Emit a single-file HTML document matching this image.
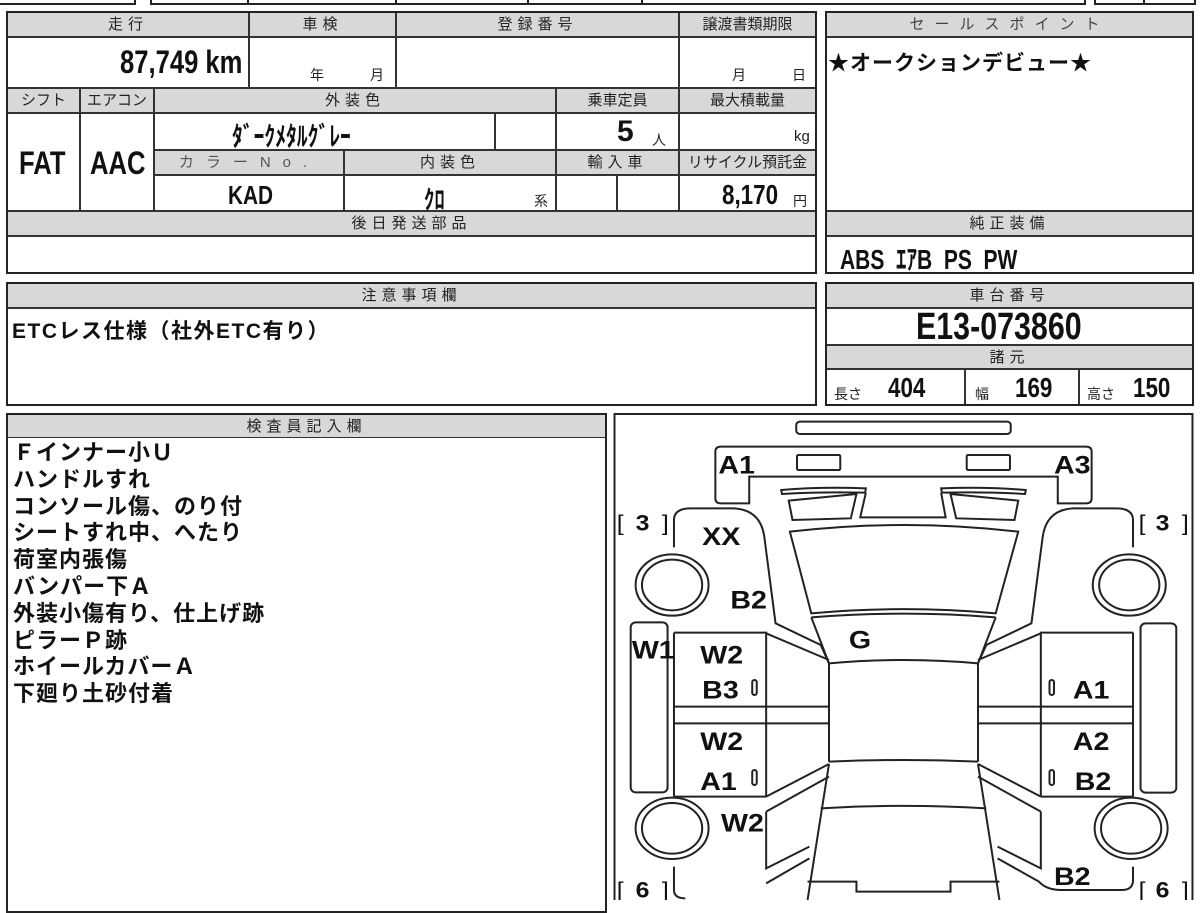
<!DOCTYPE html>
<html><head><meta charset="utf-8">
<style>
*{margin:0;padding:0;box-sizing:border-box}
body{width:1200px;height:900px;background:#fff;position:relative;overflow:hidden;font-family:"Liberation Sans","Noto Sans CJK JP",sans-serif;color:#111}
.b{position:absolute;border:2px solid #222}
.h{position:absolute;background:#d8d8d8;border:1px solid #333;font-size:15px;letter-spacing:5px;text-align:center;line-height:23px;color:#222}
.c{position:absolute;border:1px solid #333;background:#fff}
.v{position:absolute;font-family:"Liberation Sans Narrow","Liberation Sans","Noto Sans CJK JP",sans-serif;font-weight:bold;white-space:nowrap}
.s{position:absolute;font-size:14px;white-space:nowrap;color:#222}
.t{position:absolute;font-weight:bold;font-size:21px;white-space:nowrap}
</style></head><body>
<div class="b" style="left:-2px;top:-4px;width:138px;height:9px"></div>
<div class="b" style="left:150px;top:-4px;width:936px;height:9px"></div>
<div style="position:absolute;left:247px;top:0;width:2px;height:5px;background:#222"></div>
<div style="position:absolute;left:395px;top:0;width:2px;height:5px;background:#222"></div>
<div style="position:absolute;left:527px;top:0;width:2px;height:5px;background:#222"></div>
<div style="position:absolute;left:641px;top:0;width:2px;height:5px;background:#222"></div>
<div class="b" style="left:1094px;top:-4px;width:102px;height:9px"></div>
<div style="position:absolute;left:1143px;top:0;width:2px;height:5px;background:#222"></div>

<div class="h" style="left:7px;top:12px;width:242px;height:25px">走行</div>
<div class="h" style="left:249px;top:12px;width:147px;height:25px">車検</div>
<div class="h" style="left:396px;top:12px;width:283px;height:25px">登録番号</div>
<div class="h" style="left:679px;top:12px;width:137px;height:25px;letter-spacing:0">譲渡書類期限</div>
<div class="c" style="left:7px;top:37px;width:242px;height:51px"></div>
<div class="v" style="left:120px;top:44px;font-size:32px;transform:scaleX(.8);transform-origin:left">87,749 km</div>
<div class="c" style="left:249px;top:37px;width:147px;height:51px"></div>
<div class="s" style="left:310px;top:65px">年</div><div class="s" style="left:370px;top:65px">月</div>
<div class="c" style="left:396px;top:37px;width:283px;height:51px"></div>
<div class="c" style="left:679px;top:37px;width:137px;height:51px"></div>
<div class="s" style="left:732px;top:65px">月</div><div class="s" style="left:792px;top:65px">日</div>

<div class="h" style="left:7px;top:88px;width:73px;height:25px;letter-spacing:0">シフト</div>
<div class="h" style="left:80px;top:88px;width:74px;height:25px;letter-spacing:0">エアコン</div>
<div class="h" style="left:154px;top:88px;width:402px;height:25px">外装色</div>
<div class="h" style="left:556px;top:88px;width:123px;height:25px;letter-spacing:0">乗車定員</div>
<div class="h" style="left:679px;top:88px;width:137px;height:25px;letter-spacing:0">最大積載量</div>
<div class="c" style="left:7px;top:113px;width:73px;height:98px"></div>
<div class="v" style="left:19px;top:145px;font-size:32px;transform:scaleX(.8);transform-origin:left">FAT</div>
<div class="c" style="left:80px;top:113px;width:74px;height:98px"></div>
<div class="v" style="left:90px;top:145px;font-size:32px;transform:scaleX(.8);transform-origin:left">AAC</div>
<div class="c" style="left:154px;top:113px;width:341px;height:37px"></div>
<div class="v" style="left:232px;top:115px;font-size:27px;transform:scaleX(.8);transform-origin:left">ﾀﾞｰｸﾒﾀﾙｸﾞﾚｰ</div>
<div class="c" style="left:495px;top:113px;width:61px;height:37px"></div>
<div class="c" style="left:556px;top:113px;width:123px;height:37px"></div>
<div class="v" style="left:617px;top:115px;font-size:30px">5</div><div class="s" style="left:652px;top:130px">人</div>
<div class="c" style="left:679px;top:113px;width:137px;height:37px"></div>
<div class="s" style="left:794px;top:128px;font-size:15px">kg</div>

<div class="h" style="left:154px;top:150px;width:190px;height:25px;letter-spacing:12px;color:#555">カラーNo.</div>
<div class="h" style="left:344px;top:150px;width:212px;height:25px">内装色</div>
<div class="h" style="left:556px;top:150px;width:123px;height:25px">輸入車</div>
<div class="h" style="left:679px;top:150px;width:137px;height:25px;letter-spacing:0">リサイクル預託金</div>
<div class="c" style="left:154px;top:175px;width:190px;height:36px"></div>
<div class="v" style="left:228px;top:180px;font-size:26px;transform:scaleX(.8);transform-origin:left">KAD</div>
<div class="c" style="left:344px;top:175px;width:212px;height:36px"></div>
<div class="v" style="left:424px;top:180px;font-size:26px;transform:scaleX(.8);transform-origin:left">ｸﾛ</div>
<div class="s" style="left:534px;top:191px">系</div>
<div class="c" style="left:556px;top:175px;width:61px;height:36px"></div>
<div class="c" style="left:617px;top:175px;width:62px;height:36px"></div>
<div class="c" style="left:679px;top:175px;width:137px;height:36px"></div>
<div class="v" style="left:722px;top:179px;font-size:28px;transform:scaleX(.8);transform-origin:left">8,170</div>
<div class="s" style="left:793px;top:191px">円</div>
<div class="h" style="left:7px;top:211px;width:809px;height:25px">後日発送部品</div>
<div class="c" style="left:7px;top:236px;width:809px;height:37px"></div>
<div style="position:absolute;left:6px;top:11px;width:811px;height:263px;border:2px solid #222"></div>

<div class="h" style="left:826px;top:12px;width:367px;height:25px;letter-spacing:10px;color:#444">セールスポイント</div>
<div class="c" style="left:826px;top:37px;width:367px;height:174px"></div>
<div class="t" style="left:828px;top:47px;font-size:21px;letter-spacing:1px">★オークションデビュー★</div>
<div class="h" style="left:826px;top:211px;width:367px;height:25px">純正装備</div>
<div class="c" style="left:826px;top:236px;width:367px;height:37px"></div>
<div class="v" style="left:840px;top:238px;font-size:28px;transform:scaleX(.75);transform-origin:left">ABS&nbsp; ｴｱB&nbsp; PS&nbsp; PW</div>
<div style="position:absolute;left:825px;top:11px;width:369px;height:263px;border:2px solid #222"></div>

<div class="h" style="left:7px;top:283px;width:809px;height:25px">注意事項欄</div>
<div class="c" style="left:7px;top:308px;width:809px;height:97px"></div>
<div class="t" style="left:12px;top:315px;font-size:21px;letter-spacing:1.5px">ETCレス仕様（社外ETC有り）</div>
<div style="position:absolute;left:6px;top:282px;width:811px;height:124px;border:2px solid #222"></div>

<div class="h" style="left:826px;top:283px;width:367px;height:25px">車台番号</div>
<div class="c" style="left:826px;top:308px;width:367px;height:37px"></div>
<div class="v" style="left:916px;top:306px;font-size:38px;transform:scaleX(.8);transform-origin:left">E13-073860</div>
<div class="h" style="left:826px;top:345px;width:367px;height:24px">諸元</div>
<div class="c" style="left:826px;top:369px;width:139px;height:36px"></div>
<div class="s" style="left:834px;top:384px">長さ</div><div class="v" style="left:888px;top:372px;font-size:28px;transform:scaleX(.8);transform-origin:left">404</div>
<div class="c" style="left:965px;top:369px;width:114px;height:36px"></div>
<div class="s" style="left:975px;top:384px">幅</div><div class="v" style="left:1015px;top:372px;font-size:28px;transform:scaleX(.8);transform-origin:left">169</div>
<div class="c" style="left:1079px;top:369px;width:114px;height:36px"></div>
<div class="s" style="left:1087px;top:384px">高さ</div><div class="v" style="left:1133px;top:372px;font-size:28px;transform:scaleX(.8);transform-origin:left">150</div>
<div style="position:absolute;left:825px;top:282px;width:369px;height:124px;border:2px solid #222"></div>

<div class="h" style="left:7px;top:414px;width:599px;height:24px">検査員記入欄</div>
<div style="position:absolute;left:6px;top:413px;width:601px;height:500px;border:2px solid #222"></div>
<div style="position:absolute;left:13px;top:440px;font-weight:bold;font-size:22px;letter-spacing:1px;line-height:26.8px">
Ｆインナー小Ｕ<br>ハンドルすれ<br>コンソール傷、のり付<br>シートすれ中、へたり<br>荷室内張傷<br>バンパー下Ａ<br>外装小傷有り、仕上げ跡<br>ピラーＰ跡<br>ホイールカバーＡ<br>下廻り土砂付着</div>

<svg style="position:absolute;left:610px;top:410px" width="590" height="490" viewBox="0 0 1568 1470" preserveAspectRatio="none" fill="none" stroke="#222" stroke-width="2">
<g vector-effect="non-scaling-stroke">
<rect x="12" y="12" width="1536" height="1500" vector-effect="non-scaling-stroke"/>
<rect x="495" y="35" width="570" height="37" rx="10" vector-effect="non-scaling-stroke"/>
<path vector-effect="non-scaling-stroke" d="M370,280 L295,280 Q280,280 280,265 L280,125 Q280,110 295,110 L1265,110 Q1280,110 1280,125 L1280,265 Q1280,280 1265,280 L1190,280 L1190,200 L370,200 Z"/>
<rect x="497" y="135" width="115" height="45" rx="4" vector-effect="non-scaling-stroke"/>
<rect x="948" y="135" width="115" height="45" rx="4" vector-effect="non-scaling-stroke"/>
<path vector-effect="non-scaling-stroke" d="M455,240 Q560,230 680,235 L678,248 Q560,245 457,252 Z"/>
<path vector-effect="non-scaling-stroke" d="M1105,240 Q1000,230 880,235 L882,248 Q1000,245 1103,252 Z"/>
<path vector-effect="non-scaling-stroke" d="M475,272 L655,252 L640,325 L485,330 Z"/>
<path vector-effect="non-scaling-stroke" d="M1085,272 L905,252 L920,325 L1075,330 Z"/>
<path vector-effect="non-scaling-stroke" d="M680,248 L665,322 L892,322 L880,248"/>
<path vector-effect="non-scaling-stroke" d="M478,365 Q780,325 1085,365 L1025,610 Q780,585 535,610 Z"/>
<path vector-effect="non-scaling-stroke" d="M535,622 Q780,600 1025,622"/>
<path vector-effect="non-scaling-stroke" d="M535,622 L582,760 Q780,740 978,760 L1025,622"/>
<path vector-effect="non-scaling-stroke" d="M582,760 L582,1055 M978,760 L978,1055"/>
<path vector-effect="non-scaling-stroke" d="M582,1055 Q780,1045 978,1055"/>
<path vector-effect="non-scaling-stroke" d="M170,412 L170,330 Q170,295 215,295 L330,295 Q400,300 410,380 L440,640 L560,705 L582,760"/>
<path vector-effect="non-scaling-stroke" d="M170,668 L170,1160 M170,668 L415,668 L415,1160 M170,1160 L415,1160"/>
<path vector-effect="non-scaling-stroke" d="M415,670 L582,750"/>
<path vector-effect="non-scaling-stroke" d="M170,890 L582,890 M170,940 L582,940"/>
<path vector-effect="non-scaling-stroke" d="M415,1160 L582,1062 M415,1205 L582,1100 M415,1205 L415,1375 L530,1310 M530,1345 L415,1420 M170,1370 L170,1440 Q170,1465 200,1465"/>
<path vector-effect="non-scaling-stroke" d="M1390,412 L1390,330 Q1390,295 1345,295 L1230,295 Q1160,300 1150,380 L1120,640 L1000,705 L978,760"/>
<path vector-effect="non-scaling-stroke" d="M1390,668 L1390,1160 M1390,668 L1145,668 L1145,1160 M1390,1160 L1145,1160"/>
<path vector-effect="non-scaling-stroke" d="M1145,670 L978,750"/>
<path vector-effect="non-scaling-stroke" d="M1390,890 L978,890 M1390,940 L978,940"/>
<path vector-effect="non-scaling-stroke" d="M1145,1160 L978,1062 M1145,1205 L978,1100 M1145,1205 L1145,1375 L1030,1310 M1030,1345 L1140,1415 Q1160,1440 1200,1440 L1360,1440 Q1390,1440 1390,1410 L1390,1370"/>
<path vector-effect="non-scaling-stroke" d="M560,1195 Q780,1180 1000,1195"/>
<path vector-effect="non-scaling-stroke" d="M582,1062 L525,1470 M978,1062 L1035,1470"/>
<path vector-effect="non-scaling-stroke" d="M525,1415 L655,1415 L655,1445 L905,1445 L905,1415 L1035,1415"/>
<ellipse cx="165" cy="525" rx="97" ry="92" vector-effect="non-scaling-stroke"/><ellipse cx="165" cy="525" rx="80" ry="76" vector-effect="non-scaling-stroke"/>
<ellipse cx="1380" cy="525" rx="97" ry="92" vector-effect="non-scaling-stroke"/><ellipse cx="1380" cy="525" rx="80" ry="76" vector-effect="non-scaling-stroke"/>
<ellipse cx="165" cy="1255" rx="97" ry="92" vector-effect="non-scaling-stroke"/><ellipse cx="165" cy="1255" rx="80" ry="76" vector-effect="non-scaling-stroke"/>
<ellipse cx="1385" cy="1255" rx="97" ry="92" vector-effect="non-scaling-stroke"/><ellipse cx="1385" cy="1255" rx="80" ry="76" vector-effect="non-scaling-stroke"/>
<rect x="55" y="637" width="98" height="510" rx="14" vector-effect="non-scaling-stroke"/>
<rect x="1410" y="640" width="95" height="508" rx="14" vector-effect="non-scaling-stroke"/>
<rect x="378" y="810" width="12" height="45" rx="6" vector-effect="non-scaling-stroke"/>
<rect x="378" y="1080" width="12" height="45" rx="6" vector-effect="non-scaling-stroke"/>
<rect x="1168" y="810" width="12" height="45" rx="6" vector-effect="non-scaling-stroke"/>
<rect x="1168" y="1080" width="12" height="45" rx="6" vector-effect="non-scaling-stroke"/>
</g>
<g fill="#111" stroke="none" font-family="Liberation Sans Narrow, Liberation Sans, sans-serif" font-weight="bold" font-size="76">
<text x="288" y="190">A1</text><text x="1180" y="190">A3</text>
<text x="245" y="405">XX</text><text x="320" y="595">B2</text>
<text x="635" y="715">G</text><text x="58" y="745">W1</text>
<text x="240" y="760">W2</text><text x="245" y="865">B3</text>
<text x="1230" y="865">A1</text><text x="240" y="1020">W2</text>
<text x="1230" y="1020">A2</text><text x="240" y="1140">A1</text>
<text x="1235" y="1140">B2</text><text x="295" y="1265">W2</text>
<text x="1180" y="1425">B2</text>
</g>
<g fill="#111" stroke="none" font-family="Liberation Sans, sans-serif" font-size="66">
<text x="18" y="362">[</text><text x="68" y="362" font-weight="bold">3</text><text x="138" y="362">]</text>
<text x="1405" y="362">[</text><text x="1450" y="362" font-weight="bold">3</text><text x="1520" y="362">]</text>
<text x="18" y="1462">[</text><text x="68" y="1462" font-weight="bold">6</text><text x="138" y="1462">]</text>
<text x="1405" y="1462">[</text><text x="1450" y="1462" font-weight="bold">6</text><text x="1520" y="1462">]</text>
</g>
</svg>
</body></html>
